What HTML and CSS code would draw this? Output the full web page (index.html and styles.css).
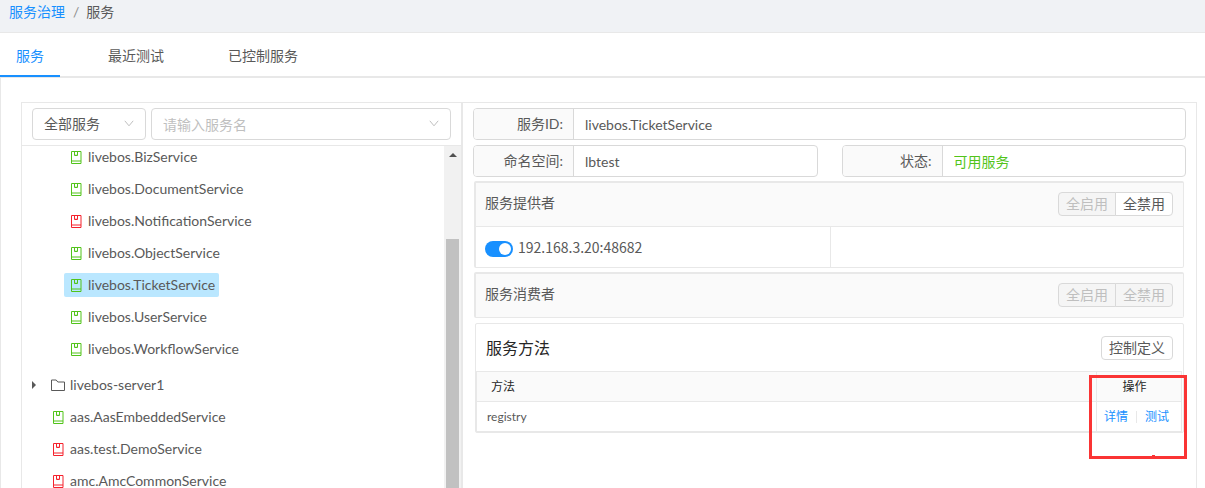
FILE: index.html
```html
<!DOCTYPE html>
<html lang="zh-CN">
<head>
<meta charset="utf-8">
<title>服务治理</title>
<link rel="stylesheet" href="styles.css">
</head>
<body>
<svg class="sprite" aria-hidden="true">
  <symbol id="book" viewBox="0 0 12 13"><path d="M1.500.5h9.500v12H1.500zM1.500 10h9.500M4.500.5v4h3v-4M6 3.500v1" fill="none" stroke="currentColor"/></symbol>
  <symbol id="folder" viewBox="0 0 14 12"><path d="M.5 1h4.700l1.600 2h6.700v8.500H.5z" fill="none" stroke="currentColor"/></symbol>
  <symbol id="chevron" viewBox="0 0 10 7"><path d="M.8.8 5 5.800 9.200.8" fill="none" stroke="currentColor"/></symbol>
</svg>
<header class="crumbs"><a href="#">服务治理</a><span class="slash">/</span><span>服务</span></header>
<nav class="tabs">
  <a href="#" class="tab active">服务</a>
  <a href="#" class="tab">最近测试</a>
  <a href="#" class="tab">已控制服务</a>
</nav>
<main class="content">
  <div class="workspace">
    <aside class="sidebar">
      <div class="filters">
        <div class="picker scope">
          <select aria-label="服务范围"><option>全部服务</option></select>
          <svg class="chevron"><use href="#chevron"/></svg>
        </div>
        <div class="picker search">
          <input type="text" placeholder="请输入服务名" aria-label="服务名">
          <svg class="chevron"><use href="#chevron"/></svg>
        </div>
      </div>
      <div class="tree-wrap">
        <ul class="tree">
          <li class="child"><a href="#" class="node"><svg class="book ok"><use href="#book"/></svg>livebos.BizService</a></li>
          <li class="child"><a href="#" class="node"><svg class="book ok"><use href="#book"/></svg>livebos.DocumentService</a></li>
          <li class="child"><a href="#" class="node"><svg class="book bad"><use href="#book"/></svg>livebos.NotificationService</a></li>
          <li class="child"><a href="#" class="node"><svg class="book ok"><use href="#book"/></svg>livebos.ObjectService</a></li>
          <li class="child"><a href="#" class="node selected"><svg class="book ok"><use href="#book"/></svg>livebos.TicketService</a></li>
          <li class="child"><a href="#" class="node"><svg class="book ok"><use href="#book"/></svg>livebos.UserService</a></li>
          <li class="child last"><a href="#" class="node"><svg class="book ok"><use href="#book"/></svg>livebos.WorkflowService</a></li>
          <li class="branch"><span class="caret"></span><a href="#" class="node"><svg class="folder"><use href="#folder"/></svg>livebos-server1</a></li>
          <li><a href="#" class="node"><svg class="book ok"><use href="#book"/></svg>aas.AasEmbeddedService</a></li>
          <li><a href="#" class="node"><svg class="book bad"><use href="#book"/></svg>aas.test.DemoService</a></li>
          <li><a href="#" class="node"><svg class="book bad"><use href="#book"/></svg>amc.AmcCommonService</a></li>
        </ul>
        <div class="scrollbar"><span class="arrow"></span><span class="thumb"></span></div>
      </div>
    </aside>
    <section class="detail">
      <div class="field"><label for="sid">服务ID:</label><input id="sid" type="text" value="livebos.TicketService" readonly></div>
      <div class="field-row">
        <div class="field"><label for="ns">命名空间:</label><input id="ns" type="text" value="lbtest" readonly></div>
        <div class="field"><label for="st">状态:</label><input id="st" class="available" type="text" value="可用服务" readonly></div>
      </div>
      <div class="cards">
        <section class="card">
          <div class="card-head"><h2>服务提供者</h2><div class="group"><button disabled>全启用</button><button>全禁用</button></div></div>
          <div class="providers">
            <label class="provider"><input type="checkbox" class="switch" checked>192.168.3.20:48682</label>
            <div class="provider"></div>
          </div>
        </section>
        <section class="card">
          <div class="card-head"><h2>服务消费者</h2><div class="group"><button disabled>全启用</button><button disabled>全禁用</button></div></div>
        </section>
        <section class="methods">
          <div class="methods-head"><h2>服务方法</h2><button>控制定义</button></div>
          <table>
            <thead><tr><th>方法</th><th class="actions">操作</th></tr></thead>
            <tbody><tr><td>registry</td><td class="actions"><a href="#">详情</a><span class="divider"></span><a href="#">测试</a></td></tr></tbody>
          </table>
          <div class="highlight"></div>
        </section>
      </div>
    </section>
  </div>
</main>
</body>
</html>
```
FILE: styles.css
```css
* { box-sizing: border-box; }
body {
  margin: 0; height: 100vh; overflow: hidden; display: flex; flex-direction: column;
  background: #fff; color: #595959;
  font: 14px/24px Lato, "Noto Sans CJK SC", sans-serif;
}
a { color: #1890ff; text-decoration: none; }
h2 { margin: 0; font-size: 14px; font-weight: 400; }
input, select, button { font: inherit; color: inherit; }
.sprite { position: absolute; width: 0; height: 0; }

.crumbs { flex: none; padding: 0 9px 8px; background: #f0f2f5; border-bottom: 1px solid #e8e8e8; }
.slash { margin: 0 7px 0 8px; color: #8c8c8c; }
.tabs { flex: none; display: flex; gap: 32px; height: 45px; border-bottom: 2px solid #e8e8e8; }
.tab { height: 44px; padding: 11px 16px 0; color: #595959; }
.tab.active { color: #1890ff; border-bottom: 2px solid #1890ff; }

.content { flex: 1; min-height: 0; padding: 24px 8px 0 20px; border-left: 1px solid #e8e8e8; }
.workspace { height: 100%; display: flex; border: 1px solid #e8e8e8; border-bottom: 0; }
.sidebar { flex: 0 0 441px; min-width: 0; display: flex; flex-direction: column; border-right: 2px solid #e8e8e8; }
.filters { display: flex; gap: 5px; padding: 5px 10px; border-bottom: 1px solid #e8e8e8; }
.picker { position: relative; height: 32px; }
.scope { width: 114px; }
.search { flex: 1; }
.picker select, .picker input {
  width: 100%; height: 32px; padding: 0 11px; appearance: none;
  border: 1px solid #d9d9d9; border-radius: 4px; background: #fff; outline: 0;
}
.picker input::placeholder { color: #bfbfbf; }
.chevron { position: absolute; right: 12px; top: 12px; width: 10px; height: 7px; color: #bfbfbf; pointer-events: none; }

.tree-wrap { flex: 1; min-height: 0; display: flex; overflow: hidden; }
.tree { flex: 1; margin: -1px 0 0; padding: 0 0 0 24px; list-style: none; }
.tree li { height: 32px; display: flex; align-items: flex-start; }
.tree .child { padding-left: 18px; }
.tree .last { height: 36px; }
.tree .branch { position: relative; }
.node { display: flex; align-items: center; gap: 6px; height: 24px; padding: 0 4px 0 6px; border-radius: 2px; color: #595959; }
.node.selected { background: #bae7ff; }
.book { width: 12px; height: 13px; }
.ok { color: #52c41a; }
.bad { color: #f5222d; }
.folder { width: 14px; height: 12px; margin: 0 -1px; }
.caret { position: absolute; left: -14px; top: 8px; border: 4px solid transparent; border-left-color: #595959; border-right: 0; }
.scrollbar { width: 17px; padding: 7px 2px 0 2px; background: #f1f1f1; display: flex; flex-direction: column; align-items: center; }
.arrow { border: 4px solid transparent; border-bottom-color: #505050; border-top: 0; }
.thumb { width: 13px; flex: 1; margin-top: 82px; background: #c1c1c1; }

.detail { flex: 1; min-width: 0; padding: 5px 10px; }
.field { flex: 1; min-width: 0; display: flex; height: 32px; border: 1px solid #d9d9d9; border-radius: 4px; }
.field label { flex: 0 0 100px; padding: 3px 10px 0 0; text-align: right; background: #fafafa; border-right: 1px solid #d9d9d9; border-radius: 3px 0 0 3px; }
.field input { flex: 1; min-width: 0; padding: 2px 11px 0; border: 0; outline: 0; background: none; }
.field .available { color: #52c41a; }
.field-row { display: flex; gap: 24px; margin-top: 5px; }
.cards { display: flex; flex-direction: column; gap: 4px; margin: 4px 2px 0 1px; }
.card { border: 1px solid #e8e8e8; border-width: 2px 1px 1px 2px; border-radius: 2px; }
.card-head { display: flex; justify-content: space-between; align-items: flex-start; height: 43px; padding: 9px 10px 0 9px; background: #fafafa; }
.card-head h2 { line-height: 22px; }
button { height: 24px; padding: 0 7px; line-height: 20px; border: 1px solid #d9d9d9; border-radius: 4px; background: #fff; }
button:disabled { color: #bfbfbf; background: #f5f5f5; }
.group { display: flex; }
.group button:first-child { border-radius: 4px 0 0 4px; }
.group button:last-child { margin-left: -1px; border-radius: 0 4px 4px 0; }
.providers { display: grid; grid-template-columns: 1fr 1fr; border-top: 1px solid #e8e8e8; }
.provider { display: flex; gap: 5px; height: 40px; padding: 8px 9px; font-family: "Noto Sans CJK SC", sans-serif; }
.provider + .provider { border-left: 1px solid #e8e8e8; }
.switch { appearance: none; position: relative; flex: none; width: 28px; height: 16px; margin: 6px 0 0; border-radius: 8px; background: #1890ff; }
.switch::after { content: ""; position: absolute; right: 2px; top: 2px; width: 12px; height: 12px; border-radius: 50%; background: #fff; }

.methods { position: relative; margin: 1px 0 0 1px; padding-right: 1px; border: 1px solid #e8e8e8; border-radius: 2px; }
.methods-head { display: flex; justify-content: space-between; align-items: center; height: 47px; padding: 0 9px 0 10px; }
.methods-head h2 { font-size: 16px; color: #262626; }
table { width: 100%; border-collapse: separate; border-spacing: 0; font-size: 12px; line-height: 18px; border: 1px solid #e8e8e8; }
th, td { height: 30px; padding: 0 10px; text-align: left; font-weight: 400; }
th { padding-left: 14px; background: #fafafa; color: #262626; border-bottom: 1px solid #e8e8e8; }
td { height: 29px; }
.actions { width: 85px; padding: 0 7px; border-left: 1px solid #e8e8e8; white-space: nowrap; }
th.actions { text-align: center; padding: 0 16px 0 7px; }
.divider { display: inline-block; width: 1px; height: 12px; margin: 0 8px; vertical-align: -2px; background: #e8e8e8; }
.highlight { position: absolute; right: -4px; bottom: -27px; width: 98px; height: 84px; border: 3px solid #fa3434; pointer-events: none; }
.highlight::after { content: ""; position: absolute; left: 60px; bottom: 0; width: 3px; height: 1px; background: #fa3434; }
```
